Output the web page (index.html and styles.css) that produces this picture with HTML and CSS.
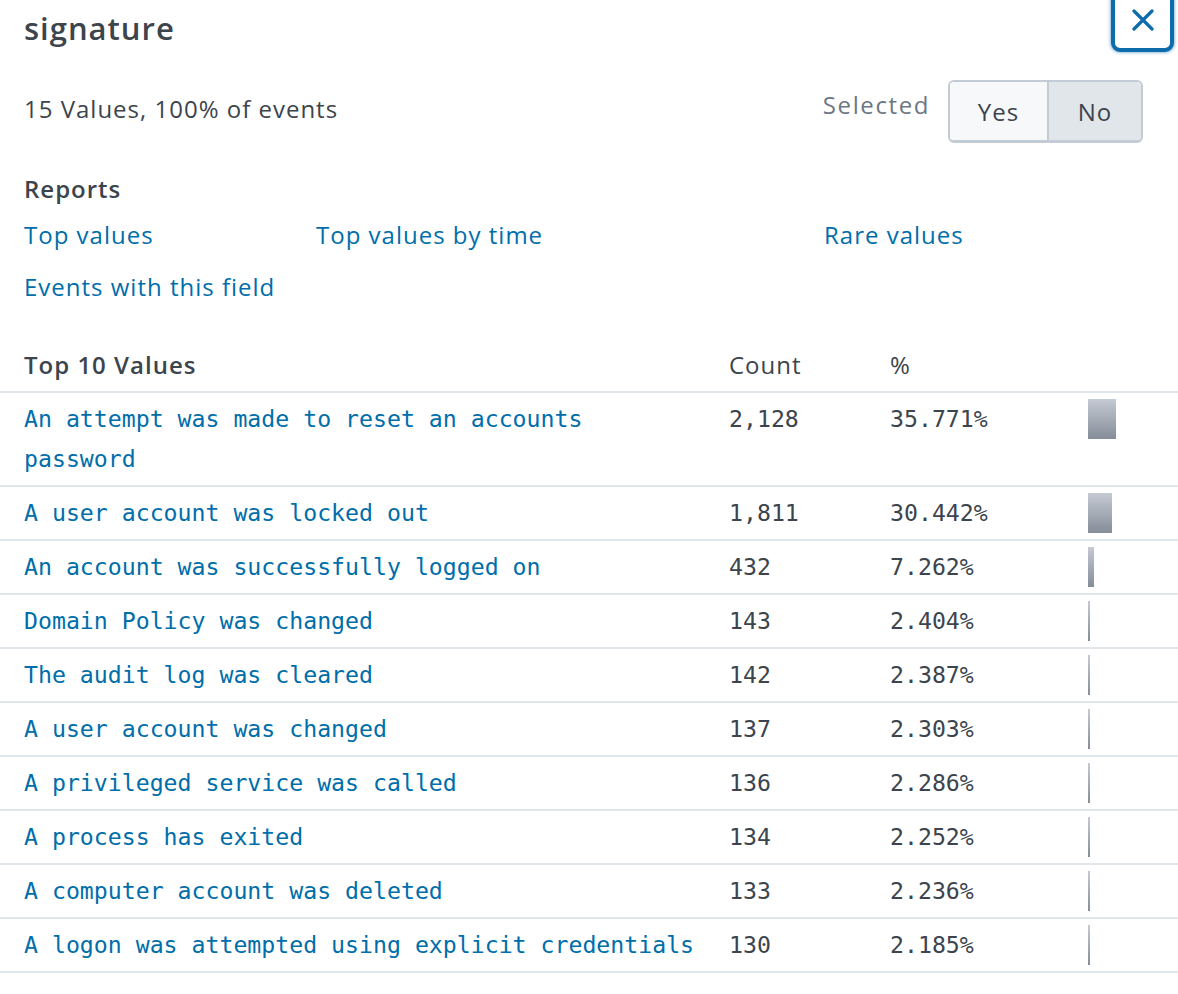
FILE: index.html
```html
<!DOCTYPE html>
<html lang="en">
<head>
<meta charset="utf-8">
<title>signature</title>
<link rel="stylesheet" href="styles.css">
</head>
<body>
<div class="panel">
  <header class="head">
    <h1 class="title">signature</h1>
    <button class="close" aria-label="Close">
      <svg width="22" height="22" viewBox="0 0 22 22"><path d="M2 2 L20 20 M20 2 L2 20" stroke="#0e6cad" stroke-width="3.2" stroke-linecap="round" fill="none"/></svg>
    </button>
  </header>

  <div class="summary">
    <span class="stats">15 Values, 100% of events</span>
    <div class="selected">
      <span class="sel-label">Selected</span>
      <div class="toggle">
        <button class="opt opt-yes">Yes</button>
        <button class="opt opt-no">No</button>
      </div>
    </div>
  </div>

  <section class="reports">
    <h2 class="reports-title">Reports</h2>
    <div class="links">
      <a class="link">Top values</a>
      <a class="link">Top values by time</a>
      <a class="link">Rare values</a>
      <a class="link">Events with this field</a>
    </div>
  </section>

  <table class="values">
    <colgroup>
      <col class="c-val"><col class="c-count"><col class="c-pct"><col class="c-bar">
    </colgroup>
    <thead>
      <tr>
        <th class="th-val">Top 10 Values</th>
        <th>Count</th>
        <th>%</th>
        <th></th>
      </tr>
    </thead>
    <tbody>
      <tr><td class="v"><a>An attempt was made to reset an accounts password</a></td><td class="n">2,128</td><td class="n">35.771%</td><td class="b"><div class="bar" style="width:28px"></div></td></tr>
      <tr><td class="v"><a>A user account was locked out</a></td><td class="n">1,811</td><td class="n">30.442%</td><td class="b"><div class="bar" style="width:24px"></div></td></tr>
      <tr><td class="v"><a>An account was successfully logged on</a></td><td class="n">432</td><td class="n">7.262%</td><td class="b"><div class="bar" style="width:6px"></div></td></tr>
      <tr><td class="v"><a>Domain Policy was changed</a></td><td class="n">143</td><td class="n">2.404%</td><td class="b"><div class="bar" style="width:2px"></div></td></tr>
      <tr><td class="v"><a>The audit log was cleared</a></td><td class="n">142</td><td class="n">2.387%</td><td class="b"><div class="bar" style="width:2px"></div></td></tr>
      <tr><td class="v"><a>A user account was changed</a></td><td class="n">137</td><td class="n">2.303%</td><td class="b"><div class="bar" style="width:2px"></div></td></tr>
      <tr><td class="v"><a>A privileged service was called</a></td><td class="n">136</td><td class="n">2.286%</td><td class="b"><div class="bar" style="width:2px"></div></td></tr>
      <tr><td class="v"><a>A process has exited</a></td><td class="n">134</td><td class="n">2.252%</td><td class="b"><div class="bar" style="width:2px"></div></td></tr>
      <tr><td class="v"><a>A computer account was deleted</a></td><td class="n">133</td><td class="n">2.236%</td><td class="b"><div class="bar" style="width:2px"></div></td></tr>
      <tr><td class="v"><a>A logon was attempted using explicit credentials</a></td><td class="n">130</td><td class="n">2.185%</td><td class="b"><div class="bar" style="width:2px"></div></td></tr>
    </tbody>
  </table>
</div>
</body>
</html>
```

FILE: styles.css
```css
* { box-sizing: border-box; }

html, body {
  margin: 0;
  padding: 0;
  background: #ffffff;
}

body {
  font-family: "Open Sans", Lato, "Liberation Sans", sans-serif;
  color: #3c444d;
  font-size: 24px;
  letter-spacing: 1px;
}

.panel {
  position: relative;
  width: 1178px;
}

.head {
  padding: 8px 24px 0 24px;
}

.title {
  margin: 0;
  font-size: 31px;
  line-height: 40px;
  font-weight: 600;
  color: #3c444d;
  letter-spacing: 1px;
}

.close {
  position: absolute;
  top: -12px;
  left: 1111px;
  width: 63px;
  height: 64px;
  border: 4px solid #0e6cad;
  border-radius: 9px;
  background: #ffffff;
  box-shadow: 0 0 3px 1px rgba(14, 108, 173, 0.45);
  display: flex;
  align-items: flex-end;
  justify-content: center;
  padding: 0 0 17px 0;
  cursor: pointer;
}

.summary {
  margin-top: 32px;
  padding: 0 35px 0 24px;
  display: flex;
  align-items: center;
  justify-content: space-between;
}

.stats {
  line-height: 32px;
  margin-top: -6px;
}

.selected {
  display: flex;
  align-items: center;
  gap: 18px;
}

.sel-label {
  color: #6b7785;
  line-height: 32px;
  margin-top: -14px;
  letter-spacing: 1.6px;
}

.toggle {
  display: flex;
  height: 63px;
  border: 2px solid #c3cbd4;
  border-bottom-width: 3px;
  border-radius: 6px;
  overflow: hidden;
}

.opt {
  border: 0;
  margin: 0;
  font-family: inherit;
  font-size: 24px;
  letter-spacing: 1px;
  color: #3c444d;
  padding: 0;
  cursor: pointer;
}

.opt-yes {
  width: 99px;
  background: #f7f8fa;
  border-right: 2px solid #c3cbd4;
}

.opt-no {
  width: 92px;
  background: #e1e6eb;
}

.reports {
  padding: 0 24px;
  margin-top: 30px;
}

.reports-title {
  margin: 0;
  font-size: 24px;
  line-height: 32px;
  font-weight: 600;
}

.links {
  margin-top: 14px;
  display: grid;
  grid-template-columns: 292px 508px auto;
  row-gap: 20px;
}

.link {
  color: #006eaa;
  line-height: 32px;
  cursor: pointer;
  white-space: nowrap;
}

.values {
  margin-top: 46px;
  width: 1178px;
  border-collapse: collapse;
  table-layout: fixed;
}

.c-val { width: 729px; }
.c-count { width: 161px; }
.c-pct { width: 198px; }
.c-bar { width: 90px; }

.values th {
  text-align: left;
  font-weight: 400;
  font-size: 24px;
  line-height: 32px;
  padding: 0 0 10px 0;
  border-bottom: 2px solid #e1e6eb;
  color: #3c444d;
}

.values th.th-val {
  font-weight: 600;
  padding-left: 24px;
}

.values td {
  vertical-align: top;
  padding: 6px 0;
  border-bottom: 2px solid #e1e6eb;
  font-family: "DejaVu Sans Mono", "Liberation Mono", monospace;
  font-size: 23.2px;
  line-height: 40px;
  letter-spacing: 0;
}

.values td.v {
  padding-left: 24px;
  padding-right: 27px;
}

.values td.v a {
  color: #006eaa;
  cursor: pointer;
}

.values td.n {
  color: #3c444d;
}

.bar {
  height: 40px;
  background: linear-gradient(to bottom, #c5cad3, #858d99);
}
```
